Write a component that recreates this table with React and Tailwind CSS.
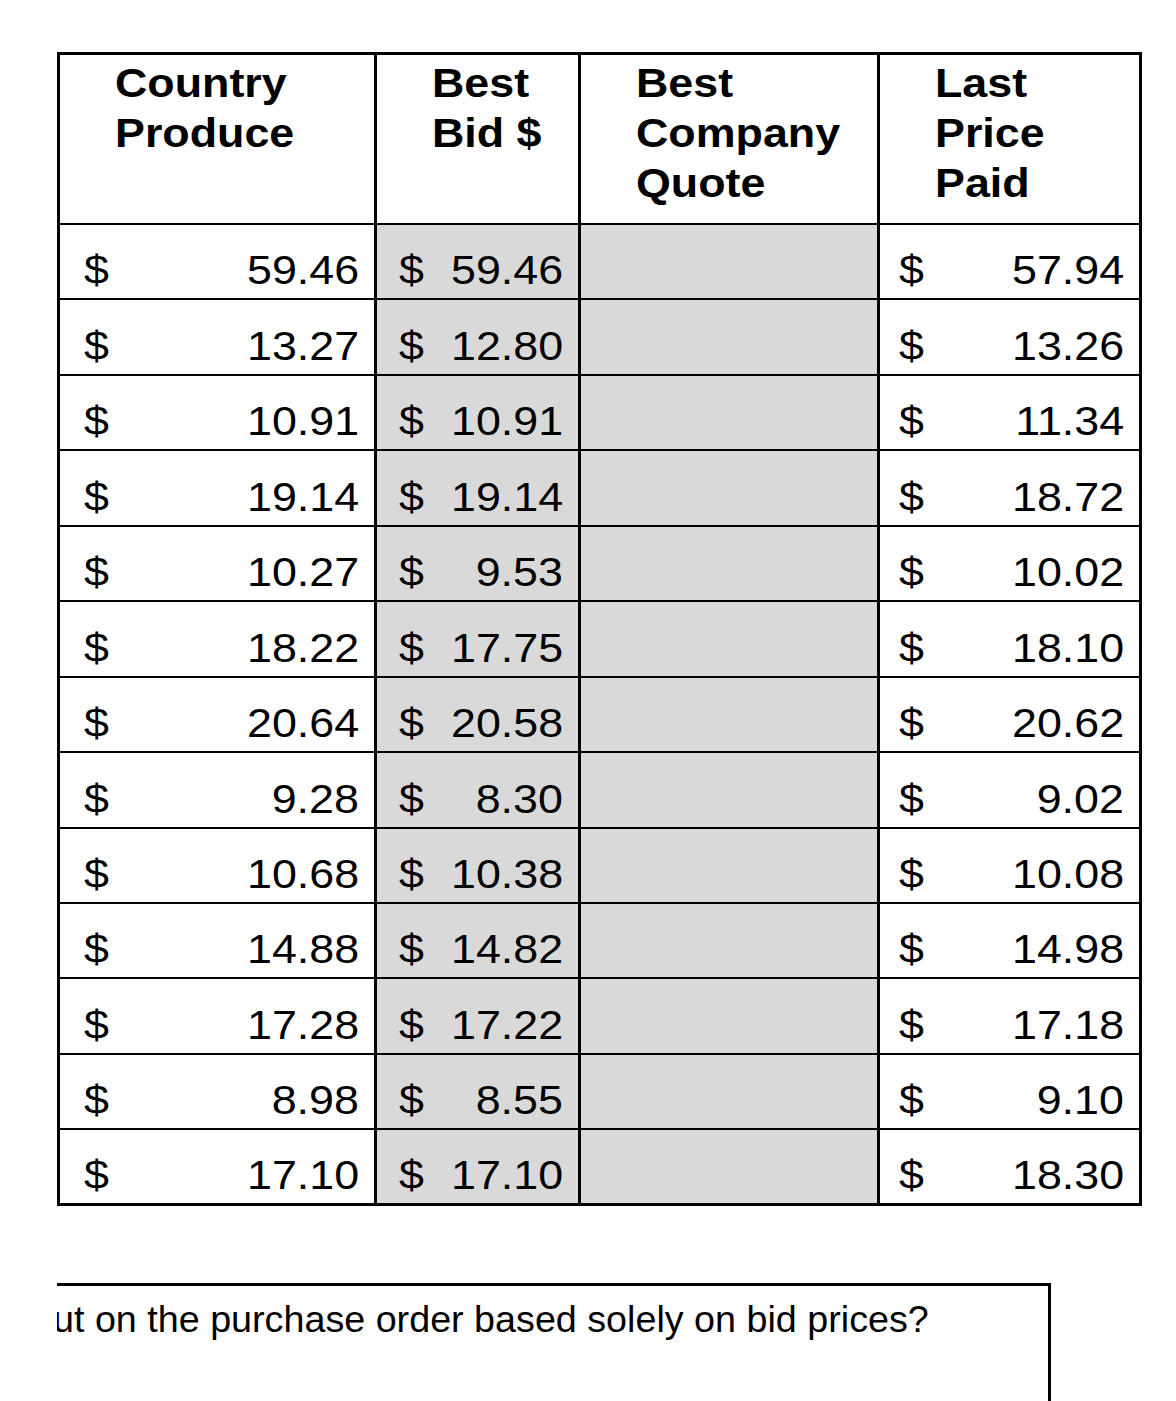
const rows = [
  ["59.46", "59.46", "57.94"],
  ["13.27", "12.80", "13.26"],
  ["10.91", "10.91", "11.34"],
  ["19.14", "19.14", "18.72"],
  ["10.27", "9.53", "10.02"],
  ["18.22", "17.75", "18.10"],
  ["20.64", "20.58", "20.62"],
  ["9.28", "8.30", "9.02"],
  ["10.68", "10.38", "10.08"],
  ["14.88", "14.82", "14.98"],
  ["17.28", "17.22", "17.18"],
  ["8.98", "8.55", "9.10"],
  ["17.10", "17.10", "18.30"],
];

function HeaderCell({ lines, last }) {
  return (
    <div
      className={`h-[170px] border-b-2 border-black pl-[55px] pt-[3px] text-[40px] font-bold leading-[50px] ${
        last ? "" : "border-r-[3px]"
      }`}
    >
      {lines.map((l) => (
        <div key={l} className="origin-left scale-x-[1.12] whitespace-nowrap">
          {l}
        </div>
      ))}
    </div>
  );
}

function MoneyCell({ value, pl, gray, last, bottom }) {
  return (
    <div
      className={[
        "flex items-end justify-between pb-[8px] pr-[15px] text-[40px] leading-[40px]",
        pl,
        bottom ? "h-[73px]" : "h-[75.44px] border-b-2 border-black",
        gray ? "bg-[#d9d9d9]" : "bg-white",
        last ? "" : "border-r-[3px] border-black",
      ].join(" ")}
    >
      <span className="inline-block origin-left scale-x-[1.12]">$</span>
      <span className="inline-block origin-right scale-x-[1.12]">{value}</span>
    </div>
  );
}

function EmptyCell({ bottom }) {
  return (
    <div
      className={[
        "border-r-[3px] border-black bg-[#d9d9d9]",
        bottom ? "h-[73px]" : "h-[75.44px] border-b-2",
      ].join(" ")}
    />
  );
}

export default function App() {
  return (
    <div className="h-[1401px] overflow-hidden bg-white pt-[52px] font-['Liberation_Sans',Arial,sans-serif] text-black">
      {/* Price table */}
      <div className="ml-[57px] w-[1085px] border-[3px] border-black">
        <div className="grid grid-cols-[317px_204px_299px_259px]">
          <HeaderCell lines={["Country", "Produce"]} />
          <HeaderCell lines={["Best", "Bid $"]} />
          <HeaderCell lines={["Best", "Company", "Quote"]} />
          <HeaderCell lines={["Last", "Price", "Paid"]} last />

          {rows.map((r, i) => {
            const bottom = i === rows.length - 1;
            return [
              <MoneyCell key={`a${i}`} value={r[0]} pl="pl-[24px]" bottom={bottom} />,
              <MoneyCell key={`b${i}`} value={r[1]} pl="pl-[22px]" gray bottom={bottom} />,
              <EmptyCell key={`c${i}`} bottom={bottom} />,
              <MoneyCell key={`d${i}`} value={r[2]} pl="pl-[19px]" last bottom={bottom} />,
            ];
          })}
        </div>
      </div>

      {/* Question box */}
      <div className="ml-[57px] mt-[77px] h-[120px] w-[994px] overflow-hidden border-r-[3px] border-t-[3px] border-black">
        <div className="-ml-[4px] whitespace-nowrap pt-[11px] text-[37.7px] leading-[44px]">
          ut on the purchase order based solely on bid prices?
        </div>
      </div>
    </div>
  );
}
